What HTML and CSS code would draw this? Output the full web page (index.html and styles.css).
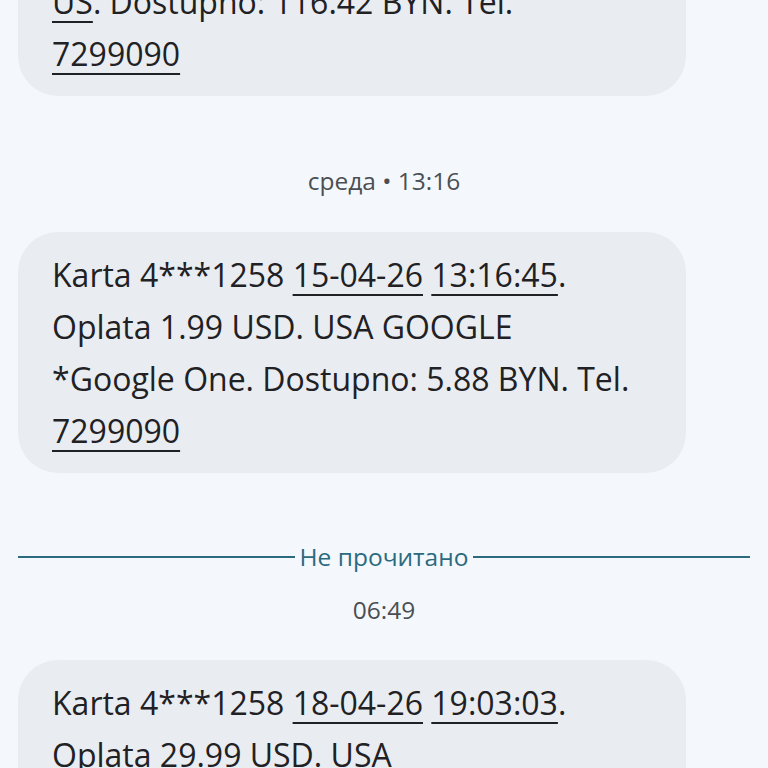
FILE: index.html
```html
<!doctype html>
<html>
<head>
	<title>Сообщения</title>
	<meta charset="utf-8">
	<link rel="stylesheet" href="styles.css">
</head>
<body>
	<div class="thread">
		<div class="bubble first">
			Karta 4***1258 <u>14-04-26</u> <u>09:12:07</u>.<br>
			Oplata 4.99 USD. <u>APPLE.COM/BILL</u><br>
			<u>US</u>. Dostupno: 116.42 BYN. Tel.<br>
			<u>7299090</u>
		</div>

		<div class="stamp">среда • 13:16</div>

		<div class="bubble">
			Karta 4***1258 <u>15-04-26</u> <u>13:16:45</u>.<br>
			Oplata 1.99 USD. USA GOOGLE<br>
			*Google One. Dostupno: 5.88 BYN. Tel.<br>
			<u>7299090</u>
		</div>

		<div class="unread"><span>Не прочитано</span></div>

		<div class="stamp time">06:49</div>

		<div class="bubble">
			Karta 4***1258 <u>18-04-26</u> <u>19:03:03</u>.<br>
			Oplata 29.99 USD. USA<br>
			GOOGLE *YouTube. Dostupno: 0.12 BYN.<br>
			Tel. <u>7299090</u>
		</div>
	</div>
</body>
</html>
```
FILE: styles.css
```css
html, body { margin: 0; padding: 0 }
body {
	background: #f4f8fc;
	font-family: "Open Sans", Roboto, sans-serif;
	overflow: hidden;
}
.thread {
	margin-top: -145px;
	padding: 0 18px;
}
.bubble {
	width: 600px;
	padding: 17px 34px 16px;
	background: #e9edf1;
	border-radius: 40px;
	color: #1f2124;
	font-size: 32px;
	line-height: 52px;
	white-space: nowrap;
}
.bubble u {
	text-decoration-thickness: 2px;
	text-underline-offset: 7px;
}
.stamp {
	text-align: center;
	color: #4b4f53;
	font-size: 24.5px;
	line-height: 30px;
	margin: 70px 0 36px;
}
.stamp.time {
	margin: 23px 0 35px;
}
.unread {
	display: flex;
	align-items: center;
	gap: 5px;
	margin: 69px 0 0;
	color: #2c6a80;
	font-size: 24.5px;
	line-height: 30px;
}
.unread::before, .unread::after {
	content: "";
	flex: 1;
	height: 2px;
	background: #2c6a80;
}
```
